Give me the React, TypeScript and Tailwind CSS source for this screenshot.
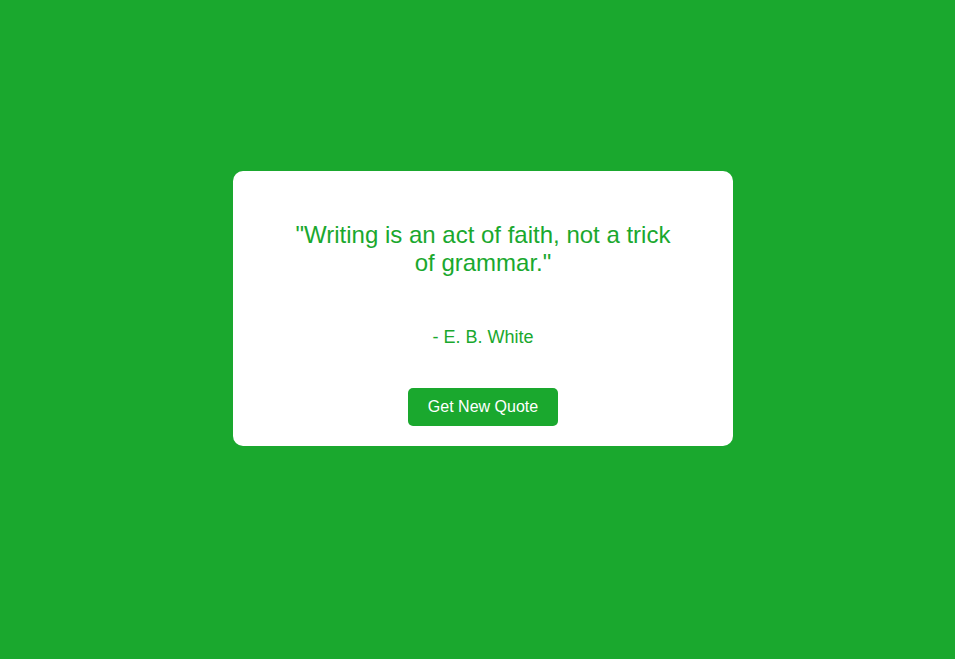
import React from "react";

function QuoteBox() {
  return (
    <div className="w-[500px] rounded-[10px] bg-white px-[50px] pt-[50px] pb-5 text-center">
      <p className="text-[24px] leading-[27.6px] text-[#1aa82e]">
        "Writing is an act of faith, not a trick of grammar."
      </p>
      <p className="mt-[51px] text-[18px] leading-[20.7px] text-[#1aa82e]">
        - E. B. White
      </p>
      <button className="mt-[40px] rounded-[5px] bg-[#1aa82e] px-5 py-[10px] text-[16px] leading-[18px] text-white">
        Get New Quote
      </button>
    </div>
  );
}

export default function App() {
  return (
    <div className="flex min-h-[659px] justify-center bg-[#1aa82e] pt-[171px] pl-[11px] font-['Liberation_Sans',Arial,sans-serif]">
      <div>
        <QuoteBox />
      </div>
    </div>
  );
}
